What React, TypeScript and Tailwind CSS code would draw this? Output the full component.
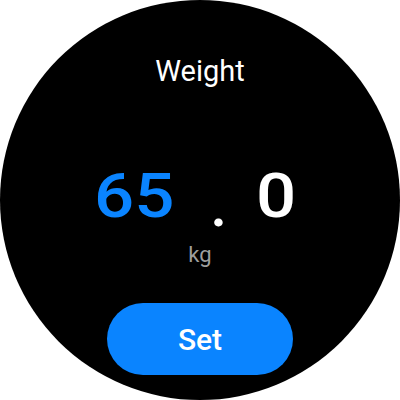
export default function App() {
  return (
    <div className="w-[400px] h-[400px] bg-white" style={{ fontFamily: 'Roboto, "Noto Sans", sans-serif' }}>
      <div className="w-[400px] h-[400px] rounded-full bg-black flex flex-col items-center overflow-hidden">
        <div className="mt-[57px] text-[29px] leading-[29px] text-white">Weight</div>
        <div className="mt-[79px] h-[62px] w-full flex items-start pl-[94px] text-[61px] leading-[62px] font-medium">
          <span className="inline-block origin-left scale-x-[1.16] text-[#0a84ff]">65</span>
          <span className="ml-[47px] mt-[9px] text-white">.</span>
          <span className="ml-[29px] inline-block origin-left scale-x-[1.16] text-white">0</span>
        </div>
        <div className="mt-[17px] text-[22px] leading-[22px] text-[#9e9e9e]">kg</div>
        <button className="mt-[37px] w-[186px] h-[72px] rounded-full bg-[#0a84ff] text-white text-[30px] font-medium flex items-center justify-center">
          Set
        </button>
      </div>
    </div>
  );
}
